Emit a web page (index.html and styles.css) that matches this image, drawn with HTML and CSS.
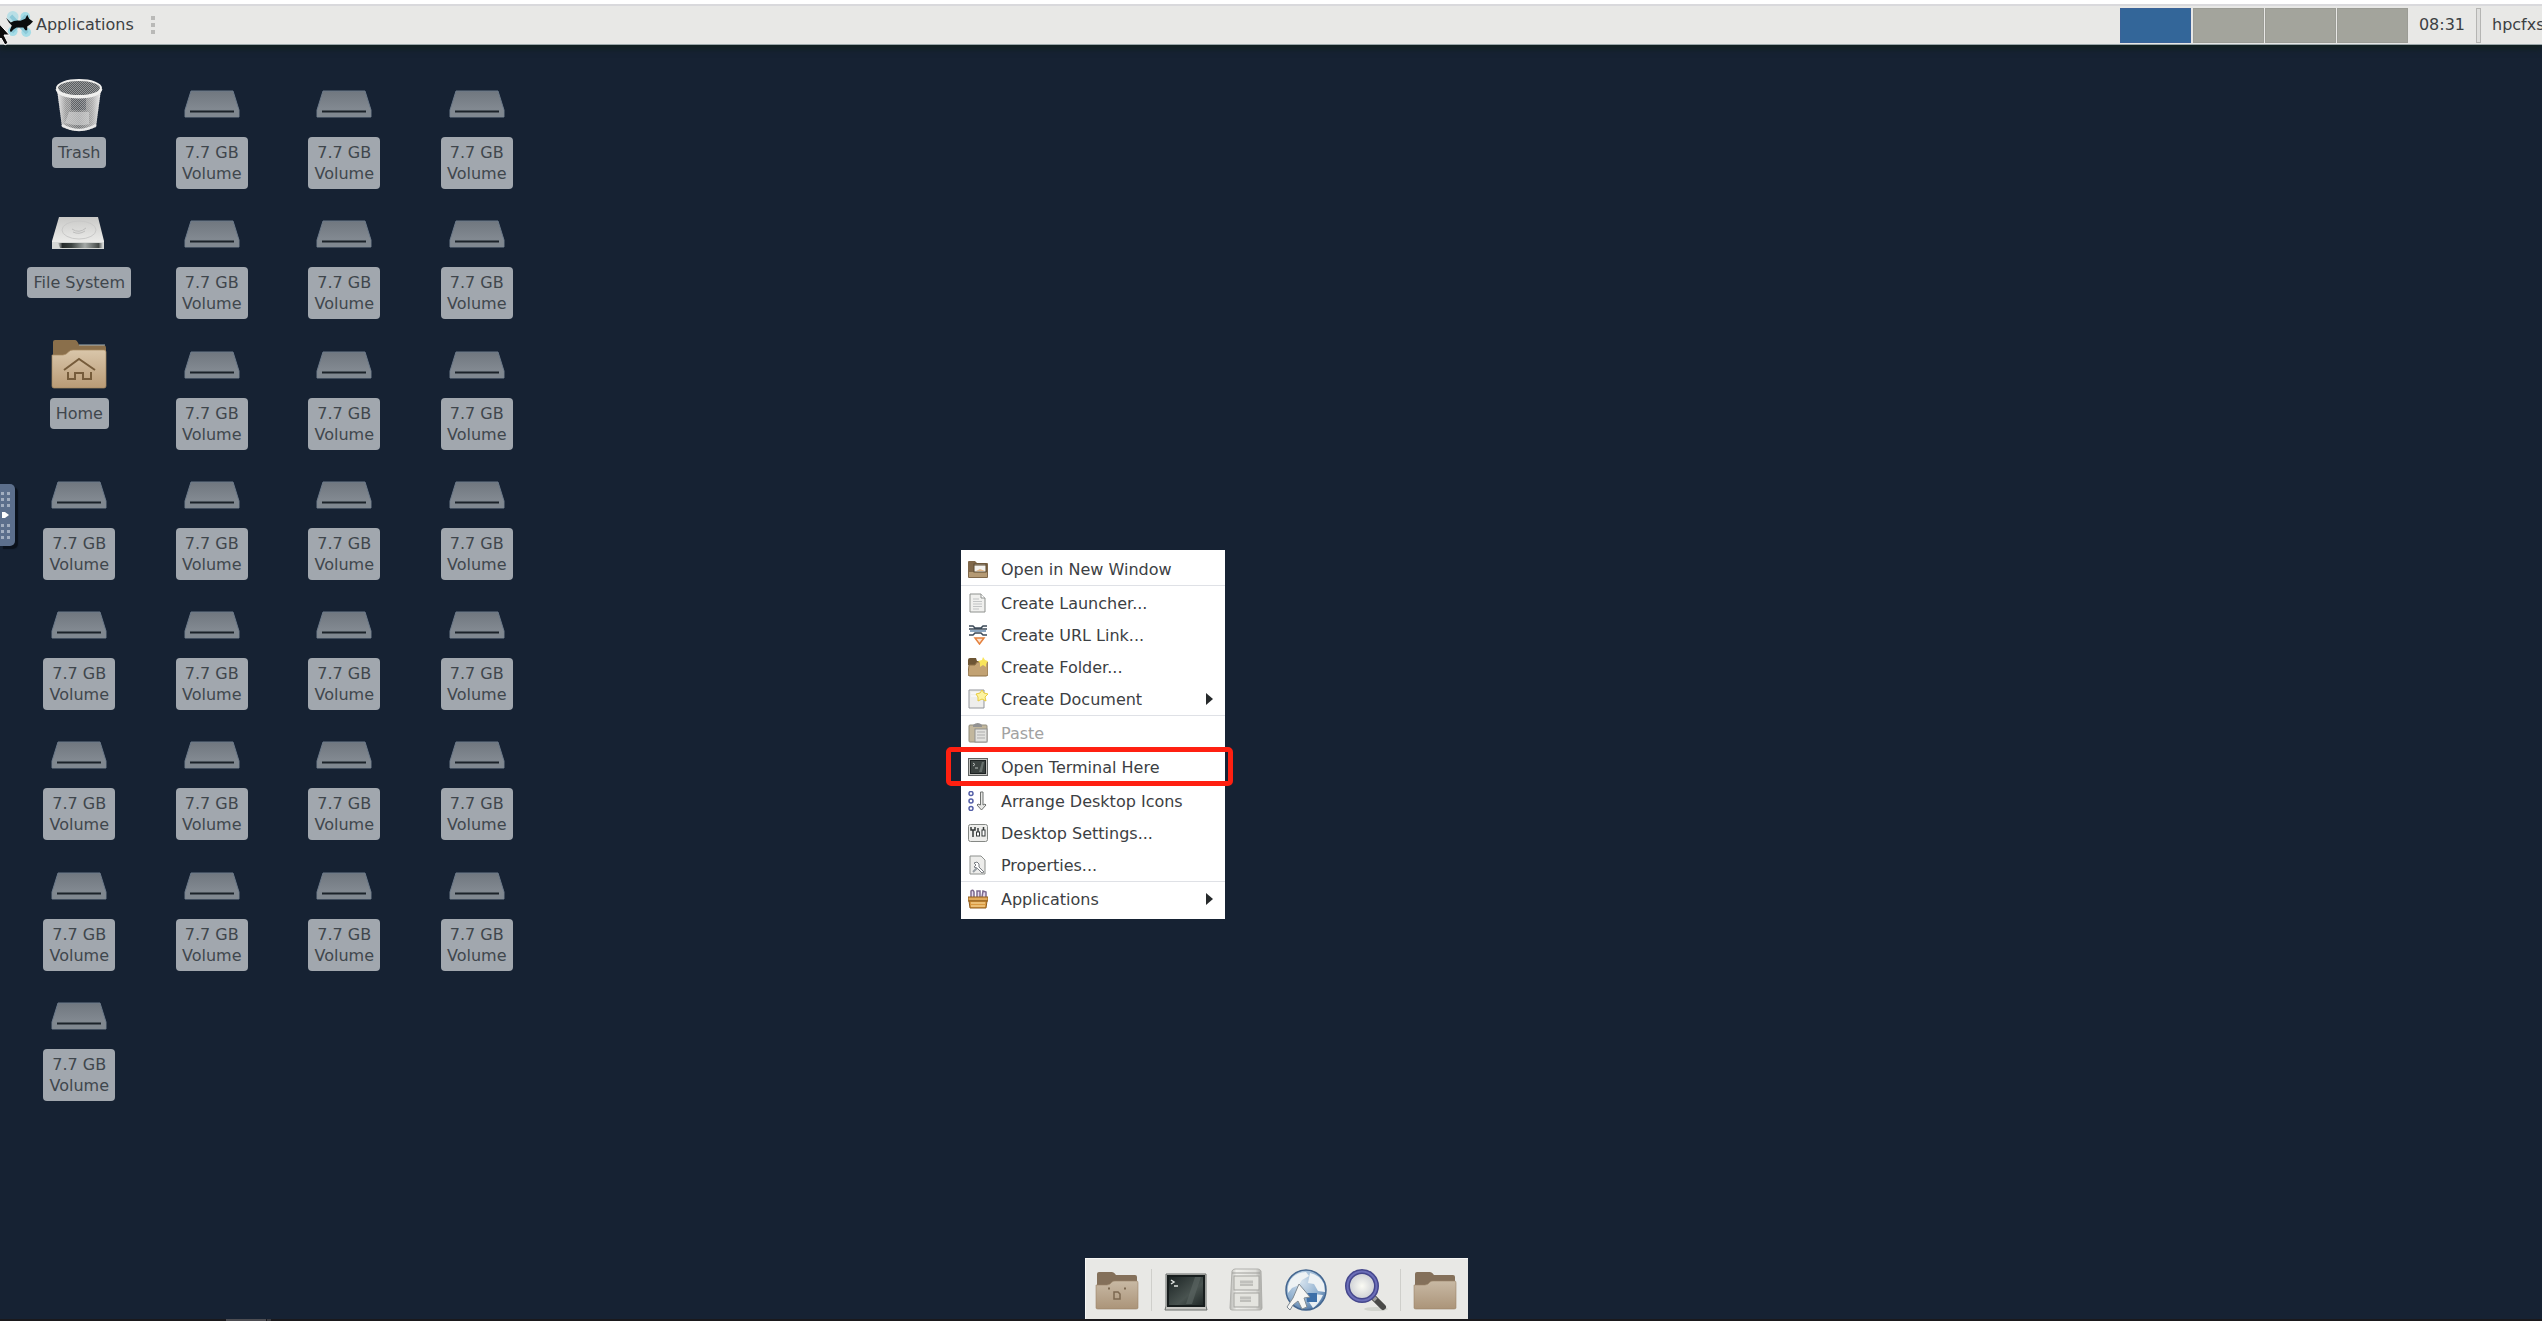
FILE: index.html
```html
<!DOCTYPE html>
<html lang="en">
<head>
<meta charset="utf-8">
<title>Desktop</title>
<link rel="stylesheet" href="styles.css">
</head>
<body>
<svg class="defs" aria-hidden="true">
  <defs>
    <linearGradient id="gVol" x1="0" y1="0" x2="0" y2="1"><stop offset="0" stop-color="#70777f"/><stop offset="1" stop-color="#8a9199"/></linearGradient>
    <linearGradient id="gDisk" x1="0" y1="0" x2="0" y2="1"><stop offset="0" stop-color="#c9c9c7"/><stop offset="1" stop-color="#f4f4f2"/></linearGradient>
    <linearGradient id="gDiskFront" x1="0" y1="0" x2="1" y2="0"><stop offset="0" stop-color="#c8cac8"/><stop offset=".1" stop-color="#252a2a"/><stop offset=".3" stop-color="#3c4341"/><stop offset=".6" stop-color="#a4a9a7"/><stop offset=".9" stop-color="#454a48"/><stop offset="1" stop-color="#d8dad8"/></linearGradient>
    <linearGradient id="gCan" x1="0" y1="0" x2="1" y2="0"><stop offset="0" stop-color="#f2f2f2"/><stop offset=".2" stop-color="#999"/><stop offset=".5" stop-color="#6f7173"/><stop offset=".8" stop-color="#aaa"/><stop offset="1" stop-color="#f4f4f4"/></linearGradient>
    <linearGradient id="gFold" x1="0" y1="0" x2="0" y2="1"><stop offset="0" stop-color="#d9c6aa"/><stop offset="1" stop-color="#b99b76"/></linearGradient>
    <linearGradient id="gFoldDull" x1="0" y1="0" x2="0" y2="1"><stop offset="0" stop-color="#c8b9a4"/><stop offset="1" stop-color="#ab9479"/></linearGradient>
    <linearGradient id="gScr" x1="0" y1="0" x2="1" y2="1"><stop offset="0" stop-color="#1a2222"/><stop offset=".6" stop-color="#495350"/><stop offset="1" stop-color="#1d2524"/></linearGradient>
    <linearGradient id="gCab" x1="0" y1="0" x2="1" y2="0"><stop offset="0" stop-color="#b6b6b2"/><stop offset=".2" stop-color="#f0f0ec"/><stop offset=".8" stop-color="#dededa"/><stop offset="1" stop-color="#a8a8a4"/></linearGradient>
    <radialGradient id="gGlobe" cx=".4" cy=".3" r=".8"><stop offset="0" stop-color="#d2e0ec"/><stop offset=".6" stop-color="#8fafcf"/><stop offset="1" stop-color="#3f6797"/></radialGradient>
    <radialGradient id="gLens"><stop offset="0" stop-color="#fbfbf4"/><stop offset="1" stop-color="#c9ccd2"/></radialGradient>
    <pattern id="mesh" width="2" height="2" patternUnits="userSpaceOnUse"><rect width="1" height="1" fill="#d6d6d6" opacity=".5"/><rect x="1" y="1" width="1" height="1" fill="#d6d6d6" opacity=".5"/></pattern>
  </defs>
  <symbol id="volume" viewBox="0 0 56 56">
    <path d="M7 14H49L55 33V40H1V33Z" fill="url(#gVol)" stroke="#6c7a8a" stroke-width="1"/>
    <path d="M1.500 32.500H54.500V40H1.500Z" fill="#808890"/>
    <path d="M6 34.500H50" stroke="#1b2229" stroke-width="2"/>
  </symbol>
  <symbol id="disk" viewBox="0 0 56 56">
    <path d="M8 10H47L53 34V41H1V34Z" fill="url(#gDisk)"/>
    <ellipse cx="28" cy="23" rx="17" ry="9" fill="none" stroke="#c9c9c8" stroke-width="1"/>
    <path d="M21 22q7 5 14-1M22 25q6 3 12-1" fill="none" stroke="#bdbdbc"/>
    <path d="M1 35H53V42H1Z" fill="#d5d7d5"/>
    <path d="M7 36H52V41H9Z" fill="url(#gDiskFront)"/>
  </symbol>
  <symbol id="trash" viewBox="0 0 56 56">
    <path d="M6 12L11 50Q28 58 45 50L50 12Z" fill="url(#gCan)"/>
    <path d="M20 17H35V33H20Z" fill="#4a4f55" opacity=".6"/>
    <path d="M18 35H38V47Q28 50 14 46Z" fill="#d8d8d8" opacity=".6"/>
    <path d="M6 14L11 50Q28 58 45 50L50 14Z" fill="url(#mesh)"/>
    <path d="M11 48Q28 58 45 48" fill="none" stroke="#e9e9e9" stroke-width="2.500"/>
    <ellipse cx="28" cy="11" rx="22" ry="8" fill="#5a5e60" stroke="#f0f0ee" stroke-width="2"/>
    <ellipse cx="28" cy="11" rx="21" ry="7" fill="url(#mesh)"/>
    <path d="M6 12Q8 20 28 20T50 12" fill="none" stroke="#f0f0ee" stroke-width="3"/>
  </symbol>
  <symbol id="home" viewBox="0 0 56 56">
    <path d="M2 4Q2 2 4 2H24Q26 2 28 7H52Q55 7 55 10V30H2Z" fill="#8a6f4b"/>
    <path d="M28 7H54" stroke="#a5b2b8"/>
    <path d="M1 17H12Q15 17 18 13.500Q19 12 22 12H53Q55 12 55 14V48Q55 50 53 50H3Q1 50 1 48Z" fill="url(#gFold)" stroke="#a88a63" stroke-width=".7"/>
    <path d="M13 32L28 21L44 32" fill="none" stroke="#765c3b" stroke-width="2"/>
    <path d="M17 34V41H24V35H32V41H40V34" fill="none" stroke="#765c3b" stroke-width="2"/>
  </symbol>
  <symbol id="folder" viewBox="0 0 48 48">
    <path d="M4 8Q4 6 6 6H19Q21 6 23 9H42Q44 9 44 11V26H4Z" fill="#84705a"/>
    <path d="M3 19H14Q17 19 19 16Q20 15 22 15H44Q45 15 45 17V42Q45 43 43 43H5Q3 43 3 42Z" fill="url(#gFoldDull)" stroke="#9a8468" stroke-width=".6"/>
  </symbol>
  <symbol id="desktop" viewBox="0 0 48 48">
    <use href="#folder"/>
    <path d="M21 26H25L27 28V33H21Z" fill="none" stroke="#7c6850" stroke-width="1.500"/>
    <path d="M15 22.500h2M31 22.500h2" stroke="#7c6850" stroke-width="2"/>
  </symbol>
  <symbol id="term" viewBox="0 0 48 48">
    <path d="M4 8H44V40L45 44H3L4 40Z" fill="#c9c9c5" stroke="#6b6f6d" stroke-width="1"/>
    <rect x="6" y="10" width="36" height="30" fill="url(#gScr)" stroke="#171d1d" stroke-width="2"/>
    <path d="M24 38L33 11H39L30 38Z" fill="#59635f" opacity=".7"/>
    <path d="M9 14l3 2-3 2M12 20h4" fill="none" stroke="#dfe3e0" stroke-width="1.500"/>
  </symbol>
  <symbol id="cabinet" viewBox="0 0 48 48">
    <path d="M10 5Q11 3 13 3H36Q38 3 39 5L40 42Q40 44 38 44H10Q8 44 8 42Z" fill="url(#gCab)" stroke="#b0b0ac" stroke-width="1"/>
    <path d="M10 7H38" stroke="#9e9e9a"/>
    <rect x="12" y="10" width="25" height="14" fill="#e4e4df" stroke="#a3a39f"/>
    <rect x="12" y="27" width="25" height="14" fill="#e4e4df" stroke="#a3a39f"/>
    <path d="M18 16H31M18 32H29" stroke="#c0c0bc" stroke-width="3"/><path d="M18 19H31M18 35H29" stroke="#999995"/>
  </symbol>
  <symbol id="globe" viewBox="0 0 48 48">
    <circle cx="24" cy="24" r="20" fill="url(#gGlobe)" stroke="#44668f" stroke-width="1.500"/>
    <path d="M9 13Q15 6 24 6L27 10L20 14L17 19L10 22L6 27Q5 19 9 13Z" fill="#eef2f4"/>
    <path d="M28 7Q38 9 42 18L43 26L36 25L32 18L26 17Z" fill="#eef2f4"/>
    <path d="M31 28L41 29Q37 38 31 42L27 36Z" fill="#e8eef2"/>
    <path d="M24 27H35V36H25Z" fill="#3d6fa8"/>
    <path d="M17 18L28 31L22 32L25 41L20 43L16 35L11 39L8 44L5 41L11 32Z" fill="#f5f5f3" stroke="#808a92" stroke-width="1"/>
  </symbol>
  <symbol id="search" viewBox="0 0 48 48">
    <ellipse cx="34" cy="43" rx="12" ry="2" fill="#d2d4ce"/>
    <path d="M31 31L41 41" stroke="#4a4a48" stroke-width="6" stroke-linecap="round"/>
    <path d="M28 28L34 34" stroke="#9c9c98" stroke-width="4"/>
    <circle cx="20" cy="20" r="14.500" fill="url(#gLens)" stroke="#45478c" stroke-width="5"/>
    <circle cx="20" cy="20" r="14.500" fill="none" stroke="#6b6eb8" stroke-width="2"/>
  </symbol>
</svg>

<header class="panel">
  <button class="apps">
    <svg class="mouse" viewBox="0 0 28 28" aria-hidden="true">
      <g fill="#a5dce6"><circle cx="7" cy="6" r="6" opacity=".7"/><circle cx="20" cy="6" r="5"/><circle cx="7" cy="21" r="5"/><circle cx="21" cy="22" r="5"/></g>
      <path d="M5 5L22 23M21 5L6 22" stroke="#8cc9d8" stroke-width="4"/>
      <path d="M0 7L5 12Q9 9 15 10L20 8L22 4L24 8L28 11L25 14L22 16L22 20L20 20L18 17H11L8 19L5 22L4 20L6 15L3 12Z" fill="#0b0d0e"/>
    </svg>
    <span>Applications</span>
  </button>
  <span class="grip"><i></i><i></i><i></i></span>
  <div class="spacer"></div>
  <div class="pager">
    <button class="ws active" aria-label="Workspace 1"></button>
    <button class="ws" aria-label="Workspace 2"></button>
    <button class="ws" aria-label="Workspace 3"></button>
    <button class="ws" aria-label="Workspace 4"></button>
  </div>
  <time class="clock">08:31</time>
  <span class="bar"></span>
  <span class="user">hpcfxs</span>
</header>

<main class="desk">
  <div class="icons">
    <button class="icon"><svg><use href="#trash"/></svg><span>Trash</span></button>
    <button class="icon"><svg><use href="#volume"/></svg><span>7.7 GB<br>Volume</span></button>
    <button class="icon"><svg><use href="#volume"/></svg><span>7.7 GB<br>Volume</span></button>
    <button class="icon"><svg><use href="#volume"/></svg><span>7.7 GB<br>Volume</span></button>

    <button class="icon"><svg><use href="#disk"/></svg><span>File System</span></button>
    <button class="icon"><svg><use href="#volume"/></svg><span>7.7 GB<br>Volume</span></button>
    <button class="icon"><svg><use href="#volume"/></svg><span>7.7 GB<br>Volume</span></button>
    <button class="icon"><svg><use href="#volume"/></svg><span>7.7 GB<br>Volume</span></button>

    <button class="icon"><svg><use href="#home"/></svg><span>Home</span></button>
    <button class="icon"><svg><use href="#volume"/></svg><span>7.7 GB<br>Volume</span></button>
    <button class="icon"><svg><use href="#volume"/></svg><span>7.7 GB<br>Volume</span></button>
    <button class="icon"><svg><use href="#volume"/></svg><span>7.7 GB<br>Volume</span></button>

    <button class="icon"><svg><use href="#volume"/></svg><span>7.7 GB<br>Volume</span></button>
    <button class="icon"><svg><use href="#volume"/></svg><span>7.7 GB<br>Volume</span></button>
    <button class="icon"><svg><use href="#volume"/></svg><span>7.7 GB<br>Volume</span></button>
    <button class="icon"><svg><use href="#volume"/></svg><span>7.7 GB<br>Volume</span></button>

    <button class="icon"><svg><use href="#volume"/></svg><span>7.7 GB<br>Volume</span></button>
    <button class="icon"><svg><use href="#volume"/></svg><span>7.7 GB<br>Volume</span></button>
    <button class="icon"><svg><use href="#volume"/></svg><span>7.7 GB<br>Volume</span></button>
    <button class="icon"><svg><use href="#volume"/></svg><span>7.7 GB<br>Volume</span></button>

    <button class="icon"><svg><use href="#volume"/></svg><span>7.7 GB<br>Volume</span></button>
    <button class="icon"><svg><use href="#volume"/></svg><span>7.7 GB<br>Volume</span></button>
    <button class="icon"><svg><use href="#volume"/></svg><span>7.7 GB<br>Volume</span></button>
    <button class="icon"><svg><use href="#volume"/></svg><span>7.7 GB<br>Volume</span></button>

    <button class="icon"><svg><use href="#volume"/></svg><span>7.7 GB<br>Volume</span></button>
    <button class="icon"><svg><use href="#volume"/></svg><span>7.7 GB<br>Volume</span></button>
    <button class="icon"><svg><use href="#volume"/></svg><span>7.7 GB<br>Volume</span></button>
    <button class="icon"><svg><use href="#volume"/></svg><span>7.7 GB<br>Volume</span></button>

    <button class="icon"><svg><use href="#volume"/></svg><span>7.7 GB<br>Volume</span></button>
  </div>

  <nav class="dock" aria-label="Dock">
    <button aria-label="Show desktop"><svg><use href="#desktop"/></svg></button>
    <span class="sep"></span>
    <div class="launchers">
      <button aria-label="Terminal"><svg><use href="#term"/></svg></button>
      <button aria-label="File manager"><svg><use href="#cabinet"/></svg></button>
      <button aria-label="Web browser"><svg><use href="#globe"/></svg></button>
      <button aria-label="Application finder"><svg><use href="#search"/></svg></button>
    </div>
    <span class="sep"></span>
    <button aria-label="Directory menu"><svg><use href="#folder"/></svg></button>
  </nav>
</main>

<footer class="edge"><i class="long"></i><i class="short"></i></footer>

<div class="menu" role="menu">
  <button class="item" role="menuitem">
    <svg viewBox="0 0 20 20"><path d="M0 3Q0 2 1 2H7L9 4H19Q20 4 20 5V18Q20 19 19 19H1Q0 19 0 18Z" fill="#80684a"/><path d="M1 13H19V18H1Z" fill="#b59a74"/><rect x="6" y="5" width="12" height="8" fill="#f4f2ee" stroke="#5d4a31"/><path d="M6 6H18" stroke="#5d4a31"/><path d="M8 12L12 10L17 12" fill="#e2b787"/></svg>
    <span>Open in New Window</span></button>
  <hr>
  <button class="item" role="menuitem">
    <svg viewBox="0 0 20 20"><path d="M2 1H13L17 5V19H2Z" fill="#f0f0ee" stroke="#8e918e"/><path d="M13 1V5H17" fill="#fff" stroke="#8e918e"/><path d="M5 6H11M5 8.500H14M5 11H14M5 13.500H14M5 16H11" stroke="#c2c4c5"/></svg>
    <span>Create Launcher...</span></button>
  <button class="item" role="menuitem">
    <svg viewBox="0 0 20 20"><path d="M1 1H5L7 3H13L15 1H19M1 4H19M1 10H5L7 8H13L15 10H19" fill="none" stroke="#3c4a58" stroke-width="1.500"/><path d="M2 6H18" stroke="#8ba5bf" stroke-width="2"/><path d="M7 13H16L11.500 19Z" fill="#fde3cd" stroke="#e5813e" stroke-width="1.500"/></svg>
    <span>Create URL Link...</span></button>
  <button class="item" role="menuitem">
    <svg viewBox="0 0 20 20"><path d="M0 3Q0 1 2 1H8L9 4H18V8H0Z" fill="#6d5534"/><path d="M1 8H7L9 5H19Q20 5 20 6V17Q20 19 18 19H2Q0 19 0 17Z" fill="#c2a273" stroke="#8d7047"/><path d="M15 0L17 3L20 4L18 7L18 10L15 8L12 10V6L10 4L14 3Z" fill="#f9e55a"/></svg>
    <span>Create Folder...</span></button>
  <button class="item" role="menuitem">
    <svg viewBox="0 0 20 20"><path d="M1 1H16V19H1Z" fill="#eeeeec" stroke="#92959a"/><path d="M3 4H11M3 7H9" stroke="#fff"/><path d="M14 1L16 4L20 5L17 8L18 12L14 10L10 12V8L8 5L12 4Z" fill="#fdf3a0" stroke="#e8cc3e"/></svg>
    <span>Create Document</span><b class="arrow"></b></button>
  <hr>
  <button class="item" role="menuitem" disabled>
    <svg viewBox="0 0 20 20"><rect x="1" y="2" width="18" height="17" rx="1" fill="#b3a685" stroke="#77705f"/><path d="M5 4V2Q10-2 14 2V4Z" fill="#777"/><rect x="7" y="6" width="12" height="13" fill="#dcdcd8" stroke="#777"/><path d="M9 9H17M9 12H17M9 15H17" stroke="#999"/></svg>
    <span>Paste</span></button>
  <hr>
  <button class="item marked" role="menuitem">
    <svg viewBox="0 0 20 20"><rect x=".5" y="1.500" width="19" height="17" fill="#c1c1be" stroke="#5f6261"/><rect x="2.500" y="3.500" width="15" height="13" fill="#3b4240" stroke="#1c2121"/><path d="M5 6L7 7.500L5 9M7 11H10" fill="none" stroke="#b8bcba"/><path d="M11 15L14 5H16L14 15Z" fill="#666f6b"/></svg>
    <span>Open Terminal Here</span></button>
  <hr>
  <button class="item" role="menuitem">
    <svg viewBox="0 0 20 20"><g fill="#fff" stroke="#5560a8" stroke-width="1.500"><circle cx="3" cy="2.500" r="2"/><circle cx="3" cy="10" r="2"/><circle cx="3" cy="17.500" r="2"/></g><path d="M12.500 1H15V14L17 13L18 14L13.500 19L9 14L10 13L12.500 14Z" fill="#e8e8e6" stroke="#6f7270"/></svg>
    <span>Arrange Desktop Icons</span></button>
  <button class="item" role="menuitem">
    <svg viewBox="0 0 20 20"><rect x=".5" y="1.500" width="19" height="17" rx="2" fill="#ededeb" stroke="#858885"/><path d="M3 4V7H7V4M5 7V14M10 12V5M15.500 4V8" fill="none" stroke="#343838" stroke-width="1.500"/><rect x="8.500" y="9" width="3" height="4" fill="#fff" stroke="#343838"/><rect x="14" y="7" width="3" height="6" fill="#fff" stroke="#343838"/></svg>
    <span>Desktop Settings...</span></button>
  <button class="item" role="menuitem">
    <svg viewBox="0 0 20 20"><path d="M2 1H13L17 5V19H2Z" fill="#ededeb" stroke="#8e918e"/><path d="M6 8L9 7L11 9V12L16 17L14 18L9 13L6 12L8 10Z" fill="#fff" stroke="#7b7f84"/><path d="M5 17L9 13" stroke="#9aa0a5" stroke-width="2"/></svg>
    <span>Properties...</span></button>
  <hr>
  <button class="item" role="menuitem">
    <svg viewBox="0 0 20 20"><path d="M3 8V2Q5 0 6 3V8M9 8V2H12V8M14 8L15 2L18 3V8" fill="#e5d9f0" stroke="#7c6a8e" stroke-width="1.500"/><path d="M0 8H20V12H0Z" fill="#e0a95b" stroke="#8f5c1c"/><path d="M1 12H19L18 19H2Z" fill="#d9983f" stroke="#8f5c1c"/><path d="M3 14H17M3 17H17" stroke="#f1ca86" stroke-width="1.500"/></svg>
    <span>Applications</span><b class="arrow"></b></button>
</div>

<button class="drawer" aria-label="Open control bar">
  <svg viewBox="0 0 15 62"><g fill="#a2aec0"><path d="M1 8h3v3h-3zM7 8h3v3h-3zM1 14h3v3h-3zM7 14h3v3h-3zM1 20h3v3h-3zM7 20h3v3h-3zM1 40h3v3h-3zM7 40h3v3h-3zM1 46h3v3h-3zM7 46h3v3h-3zM1 52h3v3h-3zM7 52h3v3h-3z"/></g><path d="M2 28H5L9 31L5 34H2Z" fill="#fff"/></svg>
</button>
<svg class="pointer" viewBox="0 0 11 24" aria-hidden="true"><path d="M-6 -4L9.500 13H4L8 21L5 23L1 16L-6 22Z" fill="#0c0c0c" stroke="#fff" stroke-width="1"/></svg>
</body>
</html>
```
FILE: styles.css
```css
* { box-sizing: border-box; }

body {
  margin: 0;
  min-height: 100vh;
  display: flex;
  flex-direction: column;
  position: relative;
  overflow-x: hidden;
  background: #162233;
  color: #3c4043;
  font: 16px/21px "DejaVu Sans", Verdana, sans-serif;
}

button {
  margin: 0;
  padding: 0;
  border: 0;
  background: none;
  color: inherit;
  font: inherit;
}

svg { display: block; flex: none; }
.defs { position: absolute; width: 0; height: 0; }

/* Top panel */
.panel {
  display: flex;
  align-items: center;
  height: 45px;
  padding-top: 1px;
  border-top: 4px solid #fff;
  border-bottom: 1px solid #9aa5a8;
  background: #e8e8e6;
  box-shadow: inset 0 2px #d9d9dc, 0 4px 6px #12201f;
}
.apps {
  display: flex;
  align-items: center;
  gap: 3px;
  padding-left: 6px;
}
.mouse { width: 27px; height: 27px; }
.grip {
  display: grid;
  gap: 3px;
  margin-left: 17px;
}
.grip i { width: 4px; height: 4px; background: #b9b9b7; }
.spacer { flex: 1; }
.pager { display: flex; gap: 1px; padding-top: 1px; }
.ws { width: 71px; height: 35px; background: #a3a49c; border: 1px solid #9b9c95; }
.ws.active { background: #336699; border-color: #3a6298; margin-right: 1px; }
.clock { margin-left: 11px; }
.bar {
  width: 5px;
  height: 35px;
  margin: 1px 11px 0;
  border: 1px solid #b5b5b3;
  background: #dededc;
}
.user { width: 50px; white-space: nowrap; }

/* Desktop */
.desk {
  flex: 1;
  display: flex;
  flex-direction: column;
  justify-content: space-between;
}
.icons {
  display: grid;
  grid-template-columns: repeat(4, 1fr);
  grid-template-rows: repeat(8, 1fr);
  width: 530px;
  height: 1042px;
  margin: 32px 0 0 13px;
}
.icon {
  display: flex;
  flex-direction: column;
  align-items: center;
  align-self: start;
  gap: 4px;
}
.icon svg { width: 56px; height: 56px; }
.icon span {
  padding: 5px 6px;
  border-radius: 4px;
  background: #a1a7ae;
  color: #3f464c;
}

/* Dock */
.dock {
  display: flex;
  align-items: center;
  align-self: center;
  gap: 10px;
  height: 61px;
  margin-left: 10px;
  padding: 2px 9px 0 7px;
  border: solid #f6f6f4;
  border-width: 1px 0 0 1px;
  background: #e8e8e5;
}
.dock svg { width: 48px; height: 48px; }
.launchers { display: flex; gap: 12px; }
.sep { width: 1px; height: 42px; background: #cfcfcb; }

.edge { display: flex; gap: 1px; height: 2px; padding-left: 226px; background: #1a191c; }
.edge .long { width: 40px; background: #4d4d52; }
.edge .short { width: 4px; background: #3c3c41; }

/* Context menu */
.menu {
  position: absolute;
  left: 961px;
  top: 550px;
  width: 264px;
  padding: 3px 0 4px;
  background: #fff;
}
.menu hr {
  height: 2px;
  margin: 0;
  border: 0;
  border-top: 1px solid #dfe1e6;
}
.item {
  display: flex;
  align-items: center;
  gap: 13px;
  position: relative;
  width: 100%;
  height: 32px;
  padding: 0 12px 0 7px;
  text-align: left;
}
.item svg { width: 20px; height: 20px; }
.item span { flex: 1; }
.item:disabled { color: #a2a2a2; }
.item:disabled svg { opacity: 0.8; }
.arrow {
  border: solid transparent;
  border-width: 6px 0 6px 7px;
  border-left-color: #26292b;
}
.marked::after {
  content: "";
  position: absolute;
  inset: -4px -8px -3px -15px;
  border: 5px solid #ff2011;
  border-radius: 5px;
}

/* Side drawer handle and mouse pointer */
.drawer {
  position: absolute;
  left: 0;
  top: 484px;
  border-radius: 0 5px 5px 0;
  background: #5c6f8c;
  box-shadow: 3px 3px 1px #0b121c;
}
.drawer svg { width: 15px; height: 62px; }
.pointer { position: absolute; left: 0; top: 22px; width: 11px; height: 24px; }
```
